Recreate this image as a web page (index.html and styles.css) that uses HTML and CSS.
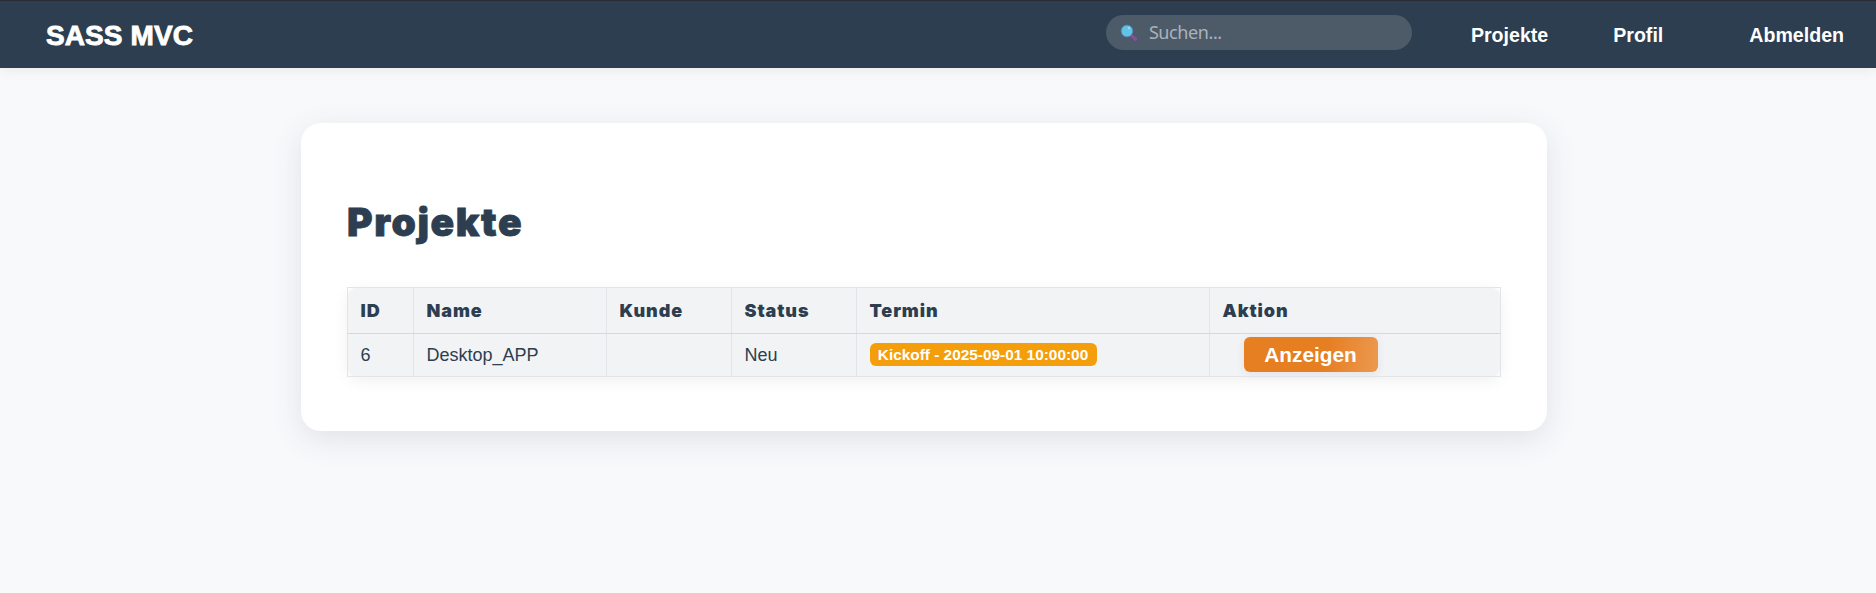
FILE: index.html
```html
<!DOCTYPE html>
<html lang="de">
<head>
<meta charset="utf-8">
<title>SASS MVC</title>
<link rel="stylesheet" href="styles.css">
</head>
<body>
<header class="topbar">
  <a class="brand">SASS MVC</a>
  <div class="search">
    <svg class="search-icon" viewBox="0 0 18 18">
      <path d="M11.6 11.6L15.6 15.2" stroke="#8a4f94" stroke-width="3.2" stroke-linecap="round"/>
      <circle cx="7" cy="7" r="5.9" fill="#62c4e2" stroke="#4a7fb8" stroke-width=".8"/>
      <circle cx="9" cy="4.2" r="1.1" fill="#a5dcee"/>
    </svg>
    <span class="placeholder">Suchen...</span>
  </div>
  <nav class="nav">
    <a>Projekte</a>
    <a>Profil</a>
    <a class="logout">Abmelden</a>
  </nav>
</header>
<main class="card">
  <h1 class="title">Projekte</h1>
  <table class="projects">
    <colgroup>
      <col class="c-id"><col class="c-name"><col class="c-client"><col class="c-status"><col class="c-date"><col class="c-action">
    </colgroup>
    <thead>
      <tr><th>ID</th><th>Name</th><th>Kunde</th><th>Status</th><th>Termin</th><th>Aktion</th></tr>
    </thead>
    <tbody>
      <tr>
        <td>6</td><td>Desktop_APP</td><td></td><td>Neu</td>
        <td><span class="badge">Kickoff - 2025-09-01 10:00:00</span></td>
        <td><a class="button">Anzeigen</a></td>
      </tr>
    </tbody>
  </table>
</main>
</body>
</html>
```
FILE: styles.css
```css
* { box-sizing: border-box; }
body {
  margin: 0;
  min-height: 593px;
  background: #f8f9fb;
  color: #2c3e50;
  font-family: "Liberation Sans", Arial, sans-serif;
}
.topbar {
  display: flex;
  align-items: flex-start;
  height: 68px;
  padding-left: 46px;
  padding-right: 32px;
  background: #2d3e50;
  border-top: 1px solid #2b2b33;
  box-shadow: 0 2px 12px rgba(0, 0, 0, .07);
  color: #fff;
}
.brand {
  margin-top: 19px;
  font-size: 28px;
  line-height: 32px;
  font-weight: 700;
  letter-spacing: .1px;
  -webkit-text-stroke: .9px #fff;
}
.search {
  display: flex;
  align-items: center;
  width: 306px;
  height: 35px;
  margin-top: 14px;
  margin-left: auto;
  padding-left: 14px;
  border-radius: 18px;
  background: #4d5b69;
}
.search-icon { width: 18px; height: 18px; }
.placeholder {
  margin-left: 11px;
  color: #abb2b9;
  font-family: "Noto Sans", sans-serif;
  font-size: 18px;
  letter-spacing: -.4px;
  line-height: 24px;
  margin-top: -2px;
}
.nav {
  display: flex;
  margin-top: 23px;
  margin-left: 59px;
  font-size: 19.6px;
  line-height: 23px;
  font-weight: 700;
}
.nav a + a { margin-left: 65px; }
.nav a.logout { margin-left: 86px; }
.card {
  width: 1246px;
  height: 308px;
  margin: 55px 0 0 301px;
  padding: 76px 46px 0;
  border-radius: 20px;
  background: #fff;
  box-shadow: 0 8px 32px rgba(44, 62, 80, .12);
}
.title {
  margin: 0 0 42px;
  font-family: Inter, sans-serif;
  font-size: 39px;
  line-height: 46px;
  font-weight: 900;
  letter-spacing: 1.6px;
  -webkit-text-stroke: .8px #2c3e50;
}
.projects {
  width: 1154px;
  table-layout: fixed;
  border-collapse: collapse;
  border-radius: 12px;
  background: #f2f3f5;
  box-shadow: 0 4px 16px rgba(0, 0, 0, .06);
  font-size: 18px;
  line-height: 20px;
}
.projects th, .projects td {
  padding: 0 0 0 12.5px;
  border: 1px solid #e2e4e7;
  text-align: left;
}
.projects th {
  height: 46px;
  border-bottom-color: #d6d9dc;
  font-family: Inter, sans-serif;
  font-size: 18px;
  font-weight: 900;
  letter-spacing: .9px;
}
.projects td { height: 43px; padding-bottom: 1px; border-left-color: #d9dbdf; }
.projects td:first-child { border-left-color: #e2e4e7; }
.c-id { width: 66px; }
.c-name { width: 193px; }
.c-client, .c-status { width: 125px; }
.c-date { width: 353px; }
.badge {
  display: block;
  width: 227px;
  height: 23px;
  border-radius: 6px;
  background: #f59e0b;
  color: #fff;
  font-size: 15.4px;
  line-height: 23px;
  font-weight: 700;
  text-align: center;
  white-space: nowrap;
}
.button {
  display: block;
  width: 134px;
  height: 35px;
  margin-left: 21px;
  border-radius: 6px;
  background: linear-gradient(100deg, #e67e22 60%, #eb984e 98%);
  box-shadow: 0 2px 8px rgba(44, 62, 80, .09);
  color: #fff;
  font-size: 20.8px;
  line-height: 35px;
  font-weight: 700;
  text-align: center;
}
```
